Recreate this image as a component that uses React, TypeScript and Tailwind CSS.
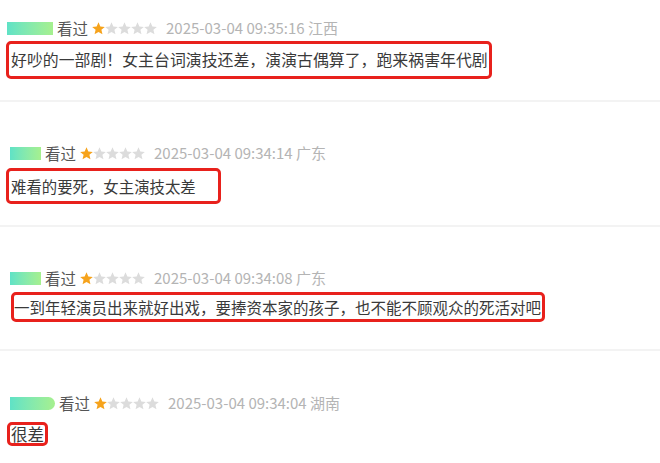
import React from "react";

type Item = {
  pt: string;
  blobW: string;
  blobMl: string;
  date: string;
  text: string;
  boxCls: string;
  mt: string;
  pb: string;
  border: boolean;
};

const Star = ({ color }: { color: string }) => (
  <svg width="13" height="13" viewBox="1 1 22 22" className="shrink-0">
    <path
      d="M12 1.5l3.1 7.1 7.6.7-5.8 5 1.8 7.5L12 17.8l-6.7 4 1.8-7.5-5.8-5 7.6-.7z"
      fill={color}
    />
  </svg>
);

const items: Item[] = [
  {
    pt: "pt-[18px]",
    blobW: "w-[46px]",
    blobMl: "ml-[7px]",
    date: "2025-03-04 09:35:16 江西",
    text: "好吵的一部剧！女主台词演技还差，演演古偶算了，跑来祸害年代剧",
    boxCls: "ml-[6px] pl-[2px] pr-[1px] py-[4px] text-[15.9px] leading-[24px]",
    mt: "mt-[3px]",
    pb: "pb-[21px]",
    border: true,
  },
  {
    pt: "pt-[41px]",
    blobW: "w-[31px]",
    blobMl: "ml-[10px]",
    date: "2025-03-04 09:34:14 广东",
    text: "难看的要死，女主演技太差",
    boxCls: "ml-[6px] pl-[2px] pr-[22px] py-[3px] text-[15.4px] leading-[24px]",
    mt: "mt-[5px]",
    pb: "pb-[21px]",
    border: true,
  },
  {
    pt: "pt-[41px]",
    blobW: "w-[31px]",
    blobMl: "ml-[10px]",
    date: "2025-03-04 09:34:08 广东",
    text: "一到年轻演员出来就好出戏，要捧资本家的孩子，也不能不顾观众的死活对吧",
    boxCls: "ml-[11px] pl-[0px] pr-[1px] py-0 text-[15.5px] leading-[24px]",
    mt: "mt-[4px]",
    pb: "pb-[27px]",
    border: true,
  },
  {
    pt: "pt-[42px]",
    blobW: "w-[45px]",
    blobMl: "ml-[10px]",
    date: "2025-03-04 09:34:04 湖南",
    text: "很差",
    boxCls: "ml-[7px] pl-[1px] pr-[1px] py-0 text-[16.5px] leading-[18px]",
    mt: "mt-[9px]",
    pb: "pb-[20px]",
    border: false,
  },
];

export default function App() {
  return (
    <div
      className="w-[660px] h-[463px] bg-white overflow-hidden flex flex-col"
      style={{ fontFamily: '"Noto Sans CJK SC", "Liberation Sans", sans-serif' }}
    >
      {items.map((it, i) => (
        <div
          key={i}
          className={`${it.pt} ${it.pb} ${
            it.border ? "border-b-2 border-[#f3f3f3]" : ""
          } flex flex-col items-start`}
        >
          <div className="flex items-center h-[20px]">
            <div
              className={`${it.blobMl} ${it.blobW} h-[13px] bg-gradient-to-r from-[#5fe2c6] to-[#a6f08e] ${
                i === 3 ? "rounded-r-full" : ""
              }`}
            />
            <span className="ml-[4px] text-[15.5px] leading-[20px] text-[#555555]">看过</span>
            <div className="ml-[4px] flex items-center">
              <Star color="#f6a31c" />
              <Star color="#dcdcdc" />
              <Star color="#dcdcdc" />
              <Star color="#dcdcdc" />
              <Star color="#dcdcdc" />
            </div>
            <span className="ml-[9px] text-[15px] leading-[20px] text-[#b4b4b4]">{it.date}</span>
          </div>
          <div
            className={`${it.mt} ${it.boxCls} border-[3px] border-[#e8211c] rounded-[5px] text-[#3a3a3a] whitespace-nowrap`}
          >
            {it.text}
          </div>
        </div>
      ))}
    </div>
  );
}
